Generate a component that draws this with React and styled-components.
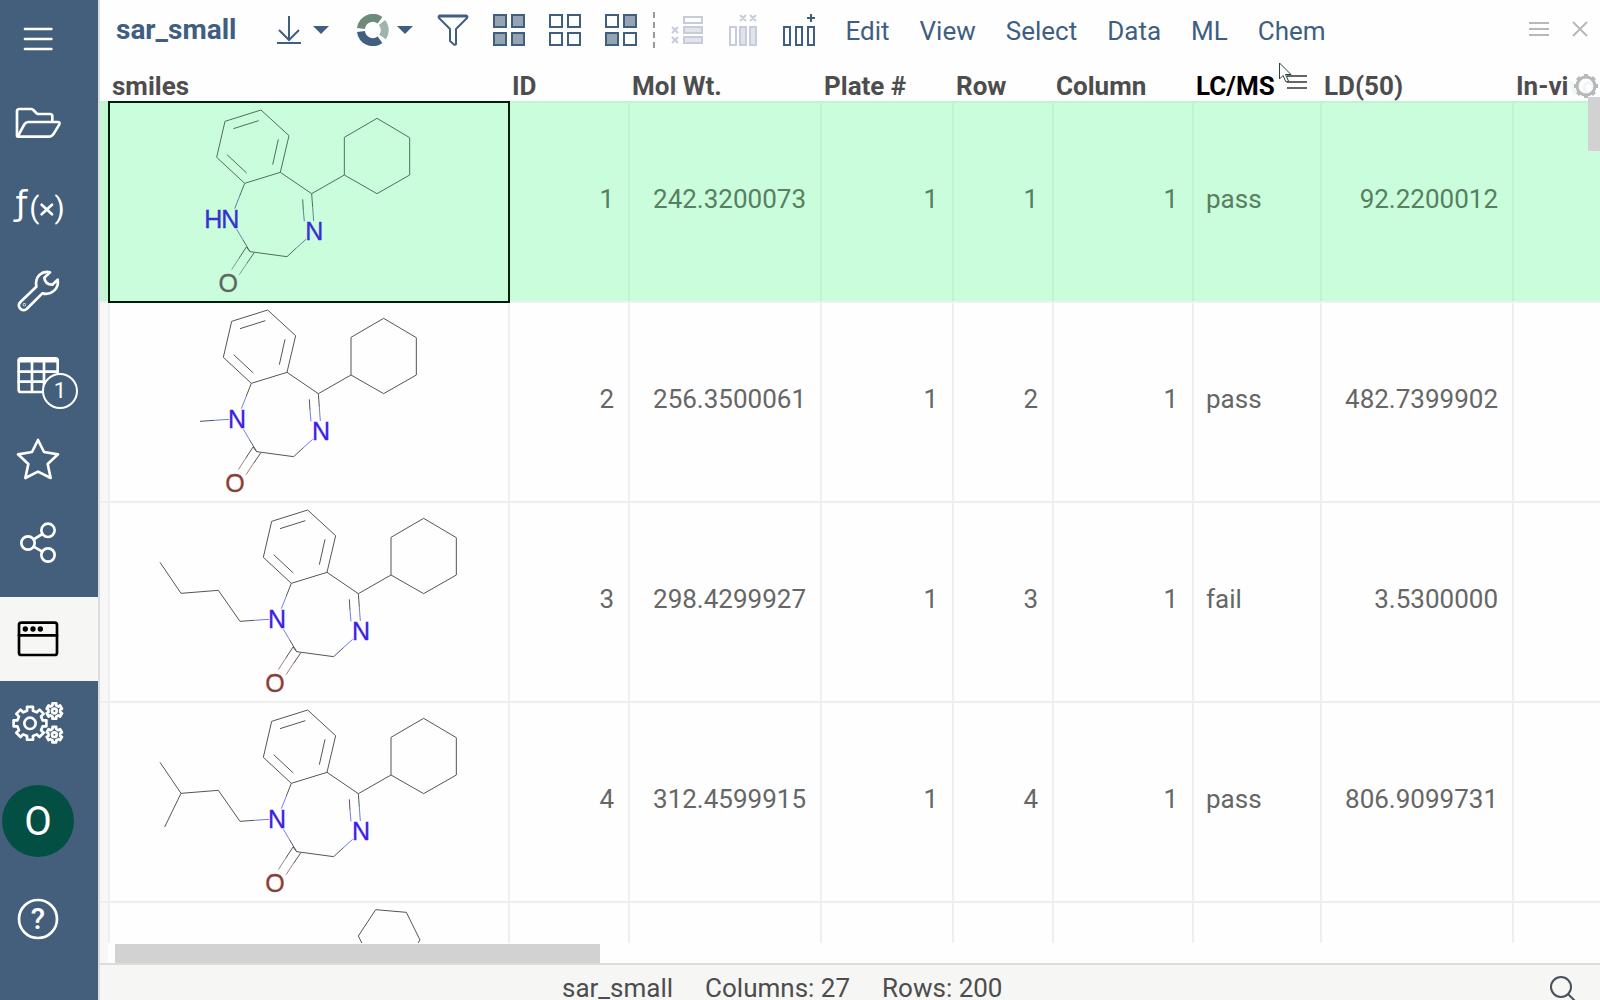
import React from "react";
import styled, { createGlobalStyle, css } from "styled-components";

const color = {
  side: "#435f7b",
  ink: "#405e82",
  inkFill: "#94a5b1",
  mute: "#c6ccdb",
  muteFill: "#e1e4e9",
  text: "#4d4d4d",
  cell: "#666666",
  line: "#efefef",
  frame: "#dcdcdc",
  chrome: "#f6f6f4",
  pick: "#cafddb",
  pickLine: "#c2f3d0",
  pickText: "#56805f",
};

const GlobalStyle = createGlobalStyle`
  *, *::before, *::after { box-sizing: border-box; }
  body {
    margin: 0;
    background: #fefefe;
    color: ${color.text};
    font-family: Roboto, "Liberation Sans", sans-serif;
    font-size: 26px;
    line-height: 30px;
  }
  button { font: inherit; color: inherit; }
`;

const bareButton = css`
  border: 0;
  padding: 0;
  background: none;
  cursor: pointer;
`;

const Shell = styled.div`
  display: flex;
  height: 100vh;
  overflow: hidden;
`;

const Sidebar = styled.nav`
  display: flex;
  flex-direction: column;
  flex: none;
  width: 98px;
  background: ${color.side};
`;

const SideButton = styled.button`
  ${bareButton}
  position: relative;
  display: flex;
  flex: none;
  align-items: center;
  justify-content: center;
  height: 84px;
  padding-right: 22px;
  margin-top: ${(p) => p.$space || 0}px;
  color: ${(p) => (p.$active ? "#000" : "#fff")};
  background: ${(p) => (p.$active ? color.chrome : "transparent")};
`;

const MenuToggle = styled(SideButton)`
  height: 81px;
  padding-bottom: 5px;
`;

const SideGlyph = styled.svg`
  display: block;
  width: 60px;
  height: 60px;
  fill: none;
  stroke: currentColor;
  stroke-width: 8;
  stroke-linejoin: round;
  stroke-linecap: round;
  overflow: visible;
`;

const HeaderStroke = styled.path`
  stroke-width: 13;
`;

const GlyphText = styled.text`
  fill: currentColor;
  stroke: none;
  font-family: ${(p) => p.$family || "Roboto"}, sans-serif;
  font-size: ${(p) => p.$size}px;
  font-weight: ${(p) => p.$weight || 400};
  text-anchor: middle;
`;

const Badge = styled.span`
  position: absolute;
  left: 42px;
  top: 40px;
  width: 36px;
  height: 36px;
  border: 2px solid #fff;
  border-radius: 50%;
  background: ${color.side};
  font-size: 22px;
  line-height: 32px;
  text-align: center;
`;

const Avatar = styled.span`
  flex: none;
  width: 72px;
  height: 72px;
  border-radius: 50%;
  background: #044f43;
  font-size: 40px;
  line-height: 74px;
  text-align: center;
`;

const Main = styled.main`
  position: relative;
  display: flex;
  flex: 1;
  flex-direction: column;
  min-width: 0;
  border-left: 2px solid ${color.frame};
`;

const Toolbar = styled.header`
  display: flex;
  flex: none;
  align-items: center;
  height: 71px;
  padding: 0 12px 12px 16px;
  color: ${color.ink};
`;

const Title = styled.h1`
  margin: 0 36px 0 0;
  font-size: 28px;
  line-height: 30px;
  font-weight: 700;
`;

const Tools = styled.div`
  display: flex;
  align-items: center;
  gap: 24px;
`;

const ToolButton = styled.button`
  ${bareButton}
  display: flex;
  align-items: center;
  gap: 8px;
  margin-right: ${(p) => (p.$wide ? 4 : 0)}px;
`;

const ToolIcon = styled.svg`
  display: block;
  width: 32px;
  height: 32px;
  fill: none;
  stroke: ${(p) => (p.$muted ? color.mute : "currentColor")};
  stroke-width: ${(p) => p.$stroke || 2};
`;

const Caret = styled.span`
  border: 8px solid transparent;
  border-top-color: ${color.ink};
  border-bottom: 0;
`;

const Divider = styled.span`
  height: 36px;
  margin: 0 -8px;
  border-left: 2px dashed #999;
`;

const Menu = styled.nav`
  display: flex;
  flex: 1;
  gap: 30px;
  margin-left: 31px;
  padding-top: 2px;
`;

const MenuButton = styled.button`
  ${bareButton}
`;

const WindowButtons = styled.div`
  display: flex;
  gap: 23px;
  padding-bottom: 2px;
  color: #b8b8b8;
`;

const SmallIcon = styled.svg`
  display: block;
  width: ${(p) => p.$w}px;
  height: 16px;
  fill: none;
  stroke: currentColor;
  stroke-width: 2;
`;

const GridArea = styled.section`
  position: relative;
  flex: 1;
  min-height: 0;
`;

const GridClip = styled.div`
  height: 100%;
  overflow: hidden;
`;

const Table = styled.table`
  width: 100%;
  table-layout: fixed;
  border-spacing: 0;
`;

const Col = styled.col`
  width: ${(p) => (p.$w ? `${p.$w}px` : "auto")};
`;

const Head = styled.th`
  height: 30px;
  padding: 0 0 0 4px;
  color: ${(p) => (p.$hover ? "#000" : color.text)};
  font-weight: 700;
  text-align: left;
  vertical-align: top;
  white-space: nowrap;
`;

const HeadInner = styled.div`
  display: flex;
  align-items: center;
  justify-content: space-between;
  padding-right: 13px;
`;

const HeadMenu = styled.button`
  ${bareButton}
  padding-bottom: 8px;
  color: #666;
`;

const Row = styled.tr`
  height: 200px;
  color: ${(p) => (p.$picked ? color.pickText : color.cell)};
  background: ${(p) => (p.$picked ? color.pick : "#fefefe")};
  --rule: ${(p) => (p.$picked ? color.pickLine : color.line)};
  --gutter: ${(p) => (p.$picked ? "#c5f7d5" : "#f7f7f7")};
`;

const Gutter = styled.td`
  padding: 0;
  border-top: 2px solid var(--rule);
  background: var(--gutter);
`;

const Cell = styled.td`
  padding: 0 14px 6px 12px;
  border-top: 2px solid var(--rule);
  border-left: 2px solid var(--rule);
  text-align: ${(p) => (p.$text ? "left" : "right")};
`;

const MolCell = styled.td`
  position: relative;
  padding: 0;
  border-top: 2px solid var(--rule);
  border-left: 2px solid var(--rule);
  ${(p) =>
    p.$current &&
    css`
      z-index: 1;
      &::after {
        content: "";
        position: absolute;
        top: -2px;
        left: -2px;
        width: 402px;
        height: 202px;
        border: 2px solid #001f08;
      }
    `}
`;

const MolSvg = styled.svg`
  display: block;
  width: 100%;
  height: 198px;
  fill: none;
  stroke-width: 3;
  stroke: ${(p) => (p.$picked ? "#4d7059" : "#555")};
`;

const NBond = styled.path`
  stroke: ${(p) => (p.$picked ? "#667fa8" : "#6b7df0")};
`;

const OBond = styled.path`
  stroke: ${(p) => (p.$picked ? "#7c9c87" : "#a08079")};
`;

const Atom = styled.text`
  fill: ${(p) => p.$fill};
  stroke: ${(p) => p.$fill};
  stroke-width: 1;
  font-family: "Liberation Sans", Arial, sans-serif;
  font-size: 75px;
  text-anchor: middle;
`;

const ColumnSettings = styled.button`
  ${bareButton}
  position: absolute;
  top: 0;
  right: 0;
  width: 32px;
  height: 30px;
  padding-left: 5px;
  background: rgba(254, 254, 254, 0.95);
  color: #b4b9bc;
`;

const SettingsIcon = styled.svg`
  display: block;
  width: 26px;
  height: 26px;
  fill: none;
  stroke: currentColor;
  stroke-width: 3;
`;

const VerticalThumb = styled.div`
  position: absolute;
  top: 26px;
  right: 0;
  width: 12px;
  height: 54px;
  background: #d2d2d2;
`;

const HorizontalTrack = styled.div`
  flex: none;
  height: 20px;
  padding: 1px 0 0 7px;
  border-left: 8px solid #f7f7f7;
`;

const HorizontalThumb = styled.div`
  width: 485px;
  max-width: 100%;
  height: 19px;
  background: #d2d2d2;
`;

const StatusBar = styled.footer`
  display: flex;
  flex: none;
  gap: 32px;
  padding: 11px 22px 0 462px;
  border-top: 2px solid ${color.frame};
  background: ${color.chrome};
  line-height: 24px;
`;

const SearchButton = styled.button`
  ${bareButton}
  height: 24px;
  margin-left: auto;
`;

const SearchIcon = styled.svg`
  display: block;
  width: 28px;
  height: 24px;
  fill: none;
  stroke: #48505a;
  stroke-width: 2;
`;

const Pointer = styled.svg`
  position: absolute;
  left: 1179px;
  top: 62px;
  width: 14px;
  height: 21px;
  fill: #fff;
  stroke: #23483c;
  stroke-width: 1;
  pointer-events: none;
`;

/* Outline of a cog: n teeth between the radii inner and outer. */
function cog(cx, cy, inner, outer, n) {
  const step = (Math.PI * 2) / n;
  const at = (r, a) =>
    `${(cx + r * Math.sin(a)).toFixed(1)} ${(cy - r * Math.cos(a)).toFixed(1)}`;
  let d = "";
  for (let i = 0; i < n; i++) {
    const a = i * step;
    d += `${i ? "L" : "M"}${at(inner, a - step * 0.29)} L${at(outer, a - step * 0.23)} `;
    d += `L${at(outer, a + step * 0.23)} L${at(inner, a + step * 0.29)} `;
  }
  return `${d}Z`;
}

function Bars({ w = 20 }) {
  return (
    <SmallIcon $w={w} viewBox={`0 0 ${w} 16`} aria-hidden="true">
      <path d={`M0 2H${w}M0 8H${w}M0 14H${w}`} />
    </SmallIcon>
  );
}

const TAIL_ROOT = "M300 364L343 361";
const TAILS = {
  methyl: TAIL_ROOT,
  butyl: `${TAIL_ROOT}M300 364L235 271L123 280L60 187`,
  isopentyl: `${TAIL_ROOT}M300 364L235 271L123 280L60 187M123 280L74 381`,
};

function Benzodiazepine({ shift, tail, picked }) {
  const nFill = picked ? "#382fd2" : "#3c1fe4";
  return (
    <MolSvg viewBox="30 9 1194 594" $picked={picked} role="img" aria-label="Molecule structure">
      <g transform={`translate(${shift} 0)`}>
        <path d="M503 30L395 64L370 172L454 250L561 217L587 107Z" />
        <path d="M420 86L496 62M401 164L460 219M538 194L555 118" />
        <path d="M561 217L655 281L753 225M753 225V112L851 55L949 113V225L851 281Z" />
        <path d="M655 281L658 322M628 298L630 331M454 250L439 288M609 444L581 470L470 455L448 418" />
        <path d="M470 455L459 441L437 475M482 459L460 491" />
        <NBond $picked={picked} d="M658 322L661 363M630 331L633 364M439 288L424 326M448 418L430 388M638 418L609 444" />
        <OBond $picked={picked} d="M437 475L415 509M460 491L438 524" />
        {tail && <path d={TAILS[tail]} />}
        {tail && <NBond d="M343 361L387 358" />}
        {!tail && <Atom $fill={nFill} x="360" y="383">H</Atom>}
        <Atom $fill={nFill} x="411" y="383">N</Atom>
        <Atom $fill={nFill} x="663" y="420">N</Atom>
        <Atom $fill={picked ? "#5f6660" : "#8a3f36"} x="405" y="576">O</Atom>
      </g>
    </MolSvg>
  );
}

function RingTop() {
  return (
    <MolSvg viewBox="30 9 1194 594" role="img" aria-label="Molecule structure">
      <path d="M827 29L919 37L960 120L908 197L816 190L775 108Z" />
    </MolSvg>
  );
}

const columns = [
  { name: "smiles", width: 400 },
  { name: "ID", width: 120 },
  { name: "Mol Wt.", width: 192 },
  { name: "Plate #", width: 132 },
  { name: "Row", width: 100 },
  { name: "Column", width: 140 },
  { name: "LC/MS", width: 128, hover: true },
  { name: "LD(50)", width: 192 },
  { name: "In-vivo" },
];

const rows = [
  { shift: -20, picked: true, values: ["1", "242.3200073", "1", "1", "1", "pass", "92.2200012", ""] },
  { shift: 0, tail: "methyl", values: ["2", "256.3500061", "1", "2", "1", "pass", "482.7399902", ""] },
  { shift: 120, tail: "butyl", values: ["3", "298.4299927", "1", "3", "1", "fail", "3.5300000", ""] },
  { shift: 120, tail: "isopentyl", values: ["4", "312.4599915", "1", "4", "1", "pass", "806.9099731", ""] },
  { ring: true, values: ["", "", "", "", "", "", "", ""] },
];

const TEXT_COLUMN = 5;

function Squares({ filled }) {
  return (
    <ToolIcon viewBox="0 0 32 32" aria-hidden="true">
      {[[1, 1], [19, 1], [1, 19], [19, 19]].map(([x, y], i) => (
        <rect key={i} x={x} y={y} width="12" height="12" fill={filled[i] ? color.inkFill : "none"} />
      ))}
    </ToolIcon>
  );
}

function SideNav() {
  return (
    <Sidebar aria-label="Main">
      <MenuToggle aria-label="Menu">
        <SideGlyph viewBox="24 24 180 180">
          <path d="M75 87H154M75 117H154M75 147H154" />
        </SideGlyph>
      </MenuToggle>
      <SideButton aria-label="Files">
        <SideGlyph viewBox="24 279 180 180">
          <path d="M51 408V334Q51 327 58 327H94Q98 327 100 330L109 339Q111 342 115 342H150Q157 342 157 349V364" />
          <path d="M53 410L73 373Q78 366 85 366H173Q181 366 178 373L160 403Q155 410 149 410Z" />
        </SideGlyph>
      </SideButton>
      <SideButton aria-label="Functions">
        <SideGlyph viewBox="24 531 180 180">
          <GlyphText $size="100" $family="'DejaVu Sans'" x="64" y="645">ƒ</GlyphText>
          <GlyphText $size="88" x="103" y="653">(</GlyphText>
          <path d="M125 614L156 643M156 614L125 643" />
          <GlyphText $size="88" x="179" y="653">)</GlyphText>
        </SideGlyph>
      </SideButton>
      <SideButton aria-label="Tools">
        <SideGlyph viewBox="24 783 180 180">
          <path d="M150 817C128 811 103 828 109 860L62 905C49 918 64 938 80 927L127 880C155 887 178 865 173 839L157 854C142 854 134 845 133 833Z" />
          <circle cx="73" cy="914" r="1" />
        </SideGlyph>
      </SideButton>
      <SideButton aria-label="Tables">
        <SideGlyph viewBox="24 1035 180 180">
          <rect x="56" y="1075" width="117" height="101" rx="7" />
          <HeaderStroke d="M59 1081H170" />
          <path d="M96 1084V1176M132 1084V1176M56 1115H172M56 1145H172" />
        </SideGlyph>
        <Badge>1</Badge>
      </SideButton>
      <SideButton aria-label="Favorites">
        <SideGlyph viewBox="24 1287 180 180">
          <path d="M114 1320L132 1356L174 1363L143 1392L152 1434L114 1415L76 1434L85 1392L54 1363L96 1356Z" />
        </SideGlyph>
      </SideButton>
      <SideButton aria-label="Share">
        <SideGlyph viewBox="24 69 180 180">
          <circle cx="84" cy="159" r="20" />
          <circle cx="144" cy="121" r="20" />
          <circle cx="144" cy="195" r="20" />
          <path d="M101 148L127 132M101 170L127 185" />
        </SideGlyph>
      </SideButton>
      <SideButton aria-label="Windows" $space={12} $active>
        <SideGlyph viewBox="24 357 180 180">
          <rect x="57" y="398" width="114" height="97" rx="7" />
          <path d="M57 436H171" />
          <g fill="currentColor" stroke="none">
            <circle cx="76" cy="417" r="8" />
            <circle cx="99" cy="417" r="8" />
            <circle cx="121" cy="417" r="8" />
          </g>
        </SideGlyph>
      </SideButton>
      <SideButton aria-label="Settings">
        <SideGlyph viewBox="24 609 180 180">
          <path d={cog(90, 700, 39, 50, 8)} />
          <circle cx="90" cy="700" r="17" />
          <path d={cog(163, 663, 18, 24, 6)} />
          <circle cx="163" cy="663" r="7" />
          <path d={cog(163, 734, 18, 24, 6)} />
          <circle cx="163" cy="734" r="7" />
        </SideGlyph>
      </SideButton>
      <SideButton aria-label="Profile" $space={14}>
        <Avatar>O</Avatar>
      </SideButton>
      <SideButton aria-label="Help" $space={14}>
        <SideGlyph viewBox="24 1197 180 180">
          <circle cx="114" cy="1287" r="57" />
          <GlyphText $size="88" $weight={500} x="114" y="1318">?</GlyphText>
        </SideGlyph>
      </SideButton>
    </Sidebar>
  );
}

function TopBar() {
  return (
    <Toolbar>
      <Title>sar_small</Title>
      <Tools>
        <ToolButton aria-label="Download" $wide>
          <ToolIcon viewBox="0 0 32 32">
            <path d="M16 2V26M6 16L16 26L26 16M4 29H28" />
          </ToolIcon>
          <Caret />
        </ToolButton>
        <ToolButton aria-label="Add viewer">
          <ToolIcon viewBox="0 0 32 32" $stroke={8}>
            <path d="M4 14.5A12 12 0 0 1 23 6.2" stroke="#6d8b79" />
            <path d="M25 8.5A12 12 0 0 1 25.500 23" stroke="#9db5ad" />
            <path d="M4 17.500A12 12 0 0 0 23 25.800" stroke="#425f82" />
          </ToolIcon>
          <Caret />
        </ToolButton>
        <ToolButton aria-label="Filter">
          <ToolIcon viewBox="0 0 32 32" strokeLinejoin="round">
            <path d="M2.500 1.500H29.500Q31 2.500 30 4L19 15V30Q18.500 31 17 30.500L13 27V15L2 4Q1 2.500 2.500 1.500ZM2 2.500H30" />
          </ToolIcon>
        </ToolButton>
        <ToolButton aria-label="Select all"><Squares filled={[1, 1, 1, 1]} /></ToolButton>
        <ToolButton aria-label="Select none"><Squares filled={[0, 0, 0, 0]} /></ToolButton>
        <ToolButton aria-label="Invert selection"><Squares filled={[0, 1, 1, 0]} /></ToolButton>
        <Divider />
        <ToolButton aria-label="Remove rows">
          <ToolIcon viewBox="0 0 32 32" $muted>
            <rect x="13" y="3" width="18" height="6" />
            <rect x="13" y="13" width="18" height="6" fill={color.muteFill} />
            <rect x="13" y="23" width="18" height="6" fill={color.muteFill} />
            <path d="M1 13L7 19M7 13L1 19M1 23L7 29M7 23L1 29" />
          </ToolIcon>
        </ToolButton>
        <ToolButton aria-label="Remove columns">
          <ToolIcon viewBox="0 0 32 32" $muted>
            <rect x="3" y="13" width="6" height="18" />
            <rect x="13" y="13" width="6" height="18" fill={color.muteFill} />
            <rect x="23" y="13" width="6" height="18" fill={color.muteFill} />
            <path d="M13 1L19 7M19 1L13 7M23 1L29 7M29 1L23 7" />
          </ToolIcon>
        </ToolButton>
        <ToolButton aria-label="Add column">
          <ToolIcon viewBox="0 0 32 32">
            <rect x="1" y="13" width="6" height="18" />
            <rect x="13" y="13" width="6" height="18" />
            <rect x="25" y="13" width="6" height="18" />
            <path d="M24 4H32M28 0V8" />
          </ToolIcon>
        </ToolButton>
      </Tools>
      <Menu aria-label="Table menu">
        {["Edit", "View", "Select", "Data", "ML", "Chem"].map((name) => (
          <MenuButton key={name}>{name}</MenuButton>
        ))}
      </Menu>
      <WindowButtons>
        <ToolButton aria-label="View menu"><Bars /></ToolButton>
        <ToolButton aria-label="Close">
          <SmallIcon $w={16} viewBox="0 0 16 16">
            <path d="M1 1L15 15M15 1L1 15" />
          </SmallIcon>
        </ToolButton>
      </WindowButtons>
    </Toolbar>
  );
}

export default function App() {
  return (
    <Shell>
      <GlobalStyle />
      <SideNav />
      <Main>
        <TopBar />
        <GridArea>
          <GridClip>
            <Table>
              <colgroup>
                <Col $w={8} />
                {columns.map((c) => <Col key={c.name} $w={c.width} />)}
              </colgroup>
              <thead>
                <tr>
                  <Head as="td" />
                  {columns.map((c) => (
                    <Head key={c.name} scope="col" $hover={c.hover}>
                      {c.hover ? (
                        <HeadInner>
                          {c.name}
                          <HeadMenu aria-label="Column menu"><Bars /></HeadMenu>
                        </HeadInner>
                      ) : c.name}
                    </Head>
                  ))}
                </tr>
              </thead>
              <tbody>
                {rows.map((r, i) => (
                  <Row key={i} $picked={r.picked}>
                    <Gutter />
                    <MolCell $current={r.picked}>
                      {r.ring ? <RingTop /> : <Benzodiazepine {...r} />}
                    </MolCell>
                    {r.values.map((v, j) => (
                      <Cell key={j} $text={j === TEXT_COLUMN}>{v}</Cell>
                    ))}
                  </Row>
                ))}
              </tbody>
            </Table>
          </GridClip>
          <ColumnSettings aria-label="Grid settings">
            <SettingsIcon viewBox="0 0 26 26">
              <circle cx="13" cy="13" r="9" />
              <path d="M13 1V4M13 22V25M1 13H4M22 13H25M4.500 4.500L6.500 6.500M19.500 19.500L21.500 21.500M4.500 21.500L6.500 19.500M19.500 6.500L21.500 4.500" strokeWidth="4" />
            </SettingsIcon>
          </ColumnSettings>
          <VerticalThumb />
        </GridArea>
        <HorizontalTrack>
          <HorizontalThumb />
        </HorizontalTrack>
        <StatusBar>
          <span>sar_small</span>
          <span>Columns: 27</span>
          <span>Rows: 200</span>
          <SearchButton aria-label="Search">
            <SearchIcon viewBox="0 0 28 24">
              <circle cx="11" cy="11" r="10" />
              <path d="M18 18L27 27" />
            </SearchIcon>
          </SearchButton>
        </StatusBar>
        <Pointer viewBox="0 0 14 21" aria-hidden="true">
          <path d="M0.500 1V17L4 13.500L7 20L9.500 19L6.500 12.500H12Z" />
        </Pointer>
      </Main>
    </Shell>
  );
}
